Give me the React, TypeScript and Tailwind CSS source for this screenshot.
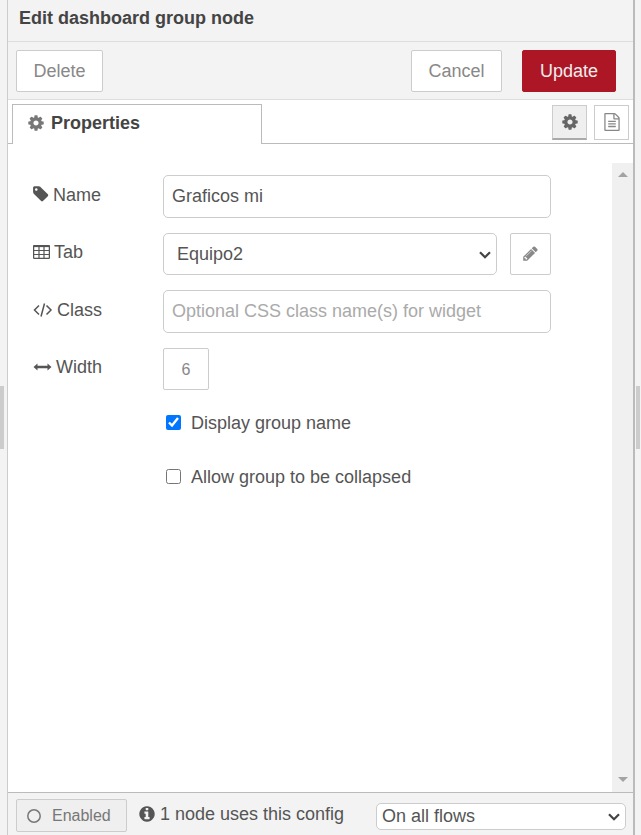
import type { ReactNode } from "react";

const COG =
  "M1152 896q0-106-75-181t-181-75-181 75-75 181 75 181 181 75 181-75 75-181zm512-109v222q0 12-8 23t-20 13l-185 28q-19 54-39 91 35 50 107 138 10 12 10 25t-9 23q-27 37-99 108t-94 71q-12 0-26-9l-138-108q-44 23-91 38-16 136-29 186-7 28-36 28h-222q-14 0-24.5-8.5t-11.5-21.5l-28-184q-49-16-90-37l-141 107q-10 9-25 9-14 0-25-11-126-114-165-168-7-10-7-23 0-12 8-23 15-21 51-66.5t54-70.5q-27-50-41-99l-183-27q-13-2-21-12.5t-8-23.5v-222q0-12 8-23t19-13l186-28q14-46 39-92-40-57-107-138-10-12-10-24 0-10 9-23 26-36 98.5-107.5t94.5-71.5q13 0 26 10l138 107q44-23 91-38 16-136 29-186 7-28 36-28h222q14 0 24.5 8.5t11.5 21.5l28 184q49 16 90 37l142-107q9-9 24-9 13 0 25 10 129 119 165 170 7 8 7 22 0 12-8 23-15 21-51 66.5t-54 70.5q26 50 41 98l183 28q13 2 21 12.5t8 23.5z";
const TAG =
  "M576 448q0-53-37.5-90.5t-90.5-37.5-90.5 37.5-37.5 90.5 37.5 90.5 90.5 37.5 90.5-37.5 37.5-90.5zm1067 576q0 53-37 90l-491 492q-39 37-91 37-53 0-90-37l-715-716q-38-37-64.5-101t-26.5-117v-416q0-52 38-90t90-38h416q53 0 117 26.5t102 64.5l715 714q37 39 37 91z";
const PENCIL =
  "M491 1536l91-91-235-235-91 91v107h128v128h107zm523-928q0-22-22-22-10 0-17 7l-542 542q-7 7-7 17 0 22 22 22 10 0 17-7l542-542q7-7 7-17zm-54-192l416 416-832 832h-416v-416zm683 96q0 53-37 90l-166 166-416-416 166-165q36-38 90-38 53 0 91 38l235 234q37 39 37 91z";
const INFO =
  "M1152 1376v-160q0-14-9-23t-23-9h-96v-512q0-14-9-23t-23-9h-320q-14 0-23 9t-9 23v160q0 14 9 23t23 9h96v320h-96q-14 0-23 9t-9 23v160q0 14 9 23t23 9h448q14 0 23-9t9-23zm-128-896v-160q0-14-9-23t-23-9h-192q-14 0-23 9t-9 23v160q0 14 9 23t23 9h192q14 0 23-9t9-23zm640 416q0 209-103 385.5t-279.5 279.5-385.5 103-385.5-103-279.5-279.5-103-385.5 103-385.5 279.5-279.5 385.5-103 385.5 103 279.5 279.5 103 385.5z";
const FILE_TEXT =
  "M1596 380q28 28 48 76t20 88v1152q0 40-28 68t-68 28h-1344q-40 0-68-28t-28-68v-1600q0-40 28-68t68-28h896q40 0 88 20t76 48zm-444-244v376h376q-10-29-22-41l-313-313q-12-12-41-22zm384 1528v-1024h-416q-40 0-68-28t-28-68v-416h-768v1536h1280zm-1024-864q0-14 9-23t23-9h704q14 0 23 9t9 23v64q0 14-9 23t-23 9h-704q-14 0-23-9t-9-23v-64zm736 224q14 0 23 9t9 23v64q0 14-9 23t-23 9h-704q-14 0-23-9t-9-23v-64q0-14 9-23t23-9h704zm0 256q14 0 23 9t9 23v64q0 14-9 23t-23 9h-704q-14 0-23-9t-9-23v-64q0-14 9-23t23-9h704z";

function Glyph({ d, className, viewBox = "0 0 1792 1792" }: { d: string; className: string; viewBox?: string }) {
  return (
    <svg viewBox={viewBox} fill="currentColor" className={className} aria-hidden="true">
      <path d={d} />
    </svg>
  );
}

function TableIcon() {
  return (
    <svg viewBox="0 0 17 14" className="h-3.5 w-[17px]" fill="none" stroke="currentColor" aria-hidden="true">
      <rect x="0.6" y="0.6" width="15.8" height="12.8" rx="1" strokeWidth="1.3" />
      <path d="M0.5 1.2h16" strokeWidth="1.8" />
      <path d="M0.5 5.5h16M0.5 9.5h16M6 1v12.5M11 1v12.5" strokeWidth="1.2" />
    </svg>
  );
}

function CodeIcon() {
  return (
    <svg viewBox="0 0 20 14" className="h-3.5 w-5" fill="none" stroke="currentColor" strokeWidth="1.5" aria-hidden="true">
      <path d="M6 2.5L1.5 7L6 11.5M13.5 2.5L18 7L13.5 11.5M11.5 0.5L8 13.5" />
    </svg>
  );
}

function ArrowsIcon() {
  return (
    <svg viewBox="0 0 19 8" className="h-2 w-[19px]" fill="currentColor" aria-hidden="true">
      <path d="M0.5 4L4.5 0.5V2.8H14.5V0.5L18.5 4L14.5 7.5V5.2H4.5V7.5Z" />
    </svg>
  );
}

function Chevron({ className }: { className: string }) {
  return (
    <svg viewBox="0 0 12 8" className={className} fill="none" stroke="#444" strokeWidth="2.2" aria-hidden="true">
      <path d="M1 1.2L6 6.2L11 1.2" />
    </svg>
  );
}

function Row({ id, icon, text, children }: { id: string; icon: ReactNode; text: string; children: ReactNode }) {
  return (
    <div className="flex items-center">
      <label htmlFor={id} className="flex w-[130px] shrink-0 items-center gap-1 pb-1">
        {icon}
        {text}
      </label>
      {children}
    </div>
  );
}

function Check({ text, checked }: { text: string; checked?: boolean }) {
  return (
    <label className="flex items-center gap-2.5">
      <input type="checkbox" defaultChecked={checked} className="mb-0.5 h-[15px] w-[15px]" />
      {text}
    </label>
  );
}

const field = "h-[43px] min-w-0 flex-1 rounded-[5px] border border-[#ccc] bg-white px-2 placeholder:text-[#aaa] placeholder:opacity-100";
const button = "h-[42px] rounded-[2px] border border-[#ccc] bg-white text-[#888]";

export default function App() {
  return (
    <div className="flex min-h-screen bg-[#f3f3f3] font-['Liberation_Sans',Arial,sans-serif] text-lg leading-6 text-[#555]">
      <div className="flex w-2 shrink-0 items-center border-r border-[#ccc]">
        <div className="h-[63px] w-1 bg-[#ccc]" />
      </div>

      <main className="flex min-w-0 flex-1 flex-col">
        <h1 className="h-[42px] border-b border-[#ddd] px-[11px] pt-1.5 font-bold text-[#444]">Edit dashboard group node</h1>

        <div className="flex h-[58px] items-center border-b border-[#ddd] pr-[17px] pl-2">
          <button className={`${button} w-[87px]`}>Delete</button>
          <button className={`${button} ml-auto w-[91px]`}>Cancel</button>
          <button className="ml-5 h-[42px] w-[94px] rounded-[2px] border border-[#ad1625] bg-[#ad1625] text-[#eee]">Update</button>
        </div>

        <div className="flex h-11 bg-white">
          <div className="w-1 border-b border-[#bbb]" />
          <button className="mt-1 flex w-[250px] items-center gap-1.5 border border-b-0 border-[#bbb] pb-1 pl-3.5 font-bold text-[#444]">
            <Glyph d={COG} className="h-[18px] w-[18px] text-[#777]" />
            Properties
          </button>
          <div className="flex flex-1 items-start justify-end gap-[7px] border-b border-[#bbb] pt-[5px] pr-1">
            <button aria-label="Properties" className="flex h-[35px] w-[35px] items-center justify-center border border-b-2 border-[#ccc] border-b-[#aaa] bg-[#efefef] text-[#666]">
              <Glyph d={COG} className="h-[18px] w-[18px]" />
            </button>
            <button aria-label="Description" className="flex h-[35px] w-[35px] items-center justify-center border border-[#ccc] bg-white pb-0.5 text-[#888]">
              <Glyph d={FILE_TEXT} className="h-[18px] w-[18px]" />
            </button>
          </div>
        </div>

        <div className="flex flex-1 bg-white pt-[19px]">
          <form className="flex min-w-0 flex-1 flex-col gap-[15px] pt-3 pr-[61px] pl-[25px]">
            <Row id="name" text="Name" icon={<Glyph d={TAG} viewBox="120 100 1600 1800" className="h-[18px] w-4" />}>
              <input id="name" defaultValue="Graficos mi" className={field} />
            </Row>
            <Row id="tab" text="Tab" icon={<TableIcon />}>
              <div className="relative flex-1">
                <select id="tab" className="block h-[42px] w-full appearance-none rounded-[5px] border border-[#ccc] bg-white pr-8 pl-[13px]">
                  <option>Equipo2</option>
                </select>
                <Chevron className="pointer-events-none absolute top-[18px] right-1.5 h-2 w-3" />
              </div>
              <button type="button" aria-label="Edit tab" className="ml-[13px] flex h-[42px] w-[41px] items-center justify-center rounded-[2px] border border-[#ccc] bg-white pb-0.5 text-[#888]">
                <Glyph d={PENCIL} className="h-[17px] w-[17px]" />
              </button>
            </Row>
            <Row id="class" text="Class" icon={<CodeIcon />}>
              <input id="class" placeholder="Optional CSS class name(s) for widget" className={field} />
            </Row>
            <Row id="width" text="Width" icon={<ArrowsIcon />}>
              <button id="width" type="button" className="h-[42px] w-[46px] rounded-[2px] border border-[#ccc] bg-white pt-0.5 text-base text-[#888]">
                6
              </button>
            </Row>
            <div className="flex flex-col gap-[30px] pt-1.5 pl-[133px]">
              <Check text="Display group name" checked />
              <Check text="Allow group to be collapsed" />
            </div>
          </form>
          <div className="flex w-[21px] shrink-0 flex-col items-center justify-between bg-[#f0f0f0] pt-[9px] pb-2.5" aria-hidden="true">
            <div className="border-x-5 border-b-5 border-x-transparent border-b-[#a3a3a3]" />
            <div className="border-x-5 border-t-5 border-x-transparent border-t-[#a3a3a3]" />
          </div>
        </div>

        <footer className="flex h-[43px] items-center border-t border-[#bbb] pr-[7px] pl-2">
          <button className="mt-0.5 flex h-[33px] w-[111px] items-center gap-[11px] rounded-[2px] border border-[#ccc] bg-[#efefef] pt-0.5 pl-2.5 text-base text-[#777]">
            <svg viewBox="0 0 14 14" className="h-3.5 w-3.5" fill="none" stroke="currentColor" strokeWidth="1.5" aria-hidden="true">
              <circle cx="7" cy="7" r="6.2" />
            </svg>
            Enabled
          </button>
          <span className="ml-[11px] flex items-center gap-1 whitespace-nowrap">
            <Glyph d={INFO} className="h-[18px] w-[18px]" />
            1 node uses this config
          </span>
          <div className="relative mt-1 ml-auto w-[250px]">
            <select aria-label="Scope" className="block h-[27px] w-full appearance-none rounded-[5px] border border-[#ccc] bg-white pr-8 pl-[5px] leading-6">
              <option>On all flows</option>
            </select>
            <Chevron className="pointer-events-none absolute top-2.5 right-1.5 h-2 w-3" />
          </div>
        </footer>
      </main>

      <div className="flex w-2 shrink-0 items-center border-l-2 border-[#bbb] pl-px">
        <div className="h-[63px] w-1 bg-[#ccc]" />
      </div>
    </div>
  );
}
